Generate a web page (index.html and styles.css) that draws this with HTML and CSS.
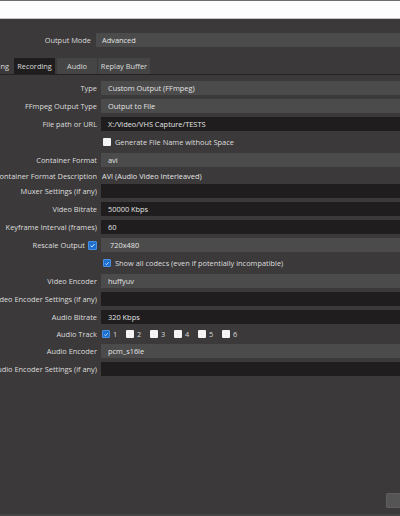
FILE: index.html
```html
<!DOCTYPE html>
<html>
<head>
<meta charset="utf-8">
<link rel="stylesheet" href="styles.css">
</head>
<body>
<div class="page">
  <div class="topbar"></div>
  <div class="mode-row">
    <div class="mode-label"><span>Output Mode</span></div>
    <div class="combo mode-combo">Advanced</div>
  </div>
  <div class="tabs">
    <div class="tab tab-first">Streaming</div>
    <div class="tab tab-active">Recording</div>
    <div class="tab">Audio</div>
    <div class="tab">Replay Buffer</div>
  </div>
  <div class="form">
    <div class="row"><div class="label"><span>Type</span></div><div class="combo">Custom Output (FFmpeg)</div></div>
    <div class="row"><div class="label"><span>FFmpeg Output Type</span></div><div class="combo">Output to File</div></div>
    <div class="row"><div class="label"><span>File path or URL</span></div><div class="field">X:/Video/VHS Capture/TESTS</div></div>
    <div class="row"><div class="label"></div><div class="check-line"><span class="cb"></span><span>Generate File Name without Space</span></div></div>
    <div class="row"><div class="label"><span>Container Format</span></div><div class="combo">avi</div></div>
    <div class="row row-desc"><div class="label"><span>Container Format Description</span></div><div class="plain">AVI (Audio Video Interleaved)</div></div>
    <div class="row"><div class="label"><span>Muxer Settings (if any)</span></div><div class="field"></div></div>
    <div class="row"><div class="label"><span>Video Bitrate</span></div><div class="field">50000 Kbps</div></div>
    <div class="row"><div class="label"><span>Keyframe Interval (frames)</span></div><div class="field">60</div></div>
    <div class="row"><div class="label"><span>Rescale Output</span><span class="cb cb-on cb-label"><svg viewBox="0 0 10 10" width="9" height="9"><path d="M2.2 5.2 L4.2 7.1 L7.9 2.9" fill="none" stroke="#fff" stroke-width="1.2"/></svg></span></div><div class="combo combo-wide">720x480</div></div>
    <div class="row"><div class="label"></div><div class="check-line"><span class="cb cb-on"><svg viewBox="0 0 10 10" width="9" height="9"><path d="M2.2 5.2 L4.2 7.1 L7.9 2.9" fill="none" stroke="#fff" stroke-width="1.2"/></svg></span><span>Show all codecs (even if potentially incompatible)</span></div></div>
    <div class="row"><div class="label"><span>Video Encoder</span></div><div class="combo">huffyuv</div></div>
    <div class="row"><div class="label"><span>Video Encoder Settings (if any)</span></div><div class="field"></div></div>
    <div class="row"><div class="label"><span>Audio Bitrate</span></div><div class="field">320 Kbps</div></div>
    <div class="row row-tracks"><div class="label"><span>Audio Track</span></div>
      <div class="tracks">
        <div class="track"><span class="cb cb-on"><svg viewBox="0 0 10 10" width="9" height="9"><path d="M2.2 5.2 L4.2 7.1 L7.9 2.9" fill="none" stroke="#fff" stroke-width="1.2"/></svg></span><span>1</span></div>
        <div class="track"><span class="cb"></span><span>2</span></div>
        <div class="track"><span class="cb"></span><span>3</span></div>
        <div class="track"><span class="cb"></span><span>4</span></div>
        <div class="track"><span class="cb"></span><span>5</span></div>
        <div class="track"><span class="cb"></span><span>6</span></div>
      </div>
    </div>
    <div class="row"><div class="label"><span>Audio Encoder</span></div><div class="combo">pcm_s16le</div></div>
    <div class="row"><div class="label"><span>Audio Encoder Settings (if any)</span></div><div class="field"></div></div>
  </div>
  <div class="footer">
    <div class="btn"></div>
  </div>
</div>
</body>
</html>
```
FILE: styles.css
```css
html, body {
  margin: 0;
  padding: 0;
}
body {
  background: #3b393a;
  font-family: "Open Sans", "Liberation Sans", sans-serif;
  font-size: 7.4px;
  color: #dedede;
  overflow: hidden;
}
.page {
  width: 400px;
  height: 516px;
  display: flex;
  flex-direction: column;
  overflow: hidden;
}
.topbar {
  height: 17px;
  background: #fdfdfd;
  border-top: 1px solid #6e6e6e;
  border-bottom: 1px solid #c4c4c4;
  flex-shrink: 0;
}
.mode-row {
  display: flex;
  height: 14px;
  margin-top: 14px;
  flex-shrink: 0;
}
.mode-label {
  width: 91px;
  display: flex;
  justify-content: flex-end;
  align-items: center;
  margin-right: 5px;
  flex-shrink: 0;
}
.mode-label span, .label span {
  white-space: nowrap;
  flex-shrink: 0;
}
.combo, .field, .plain {
  flex: 1;
  display: flex;
  align-items: center;
  padding-left: 7px;
  white-space: nowrap;
  color: #e4e4e4;
  min-width: 0;
}
.combo {
  background: #4b4b4b;
}
.mode-combo {
  padding-left: 6px;
}
.field {
  background: #1f1d1e;
}
.plain {
  padding-left: 1px;
}
.tabs {
  display: flex;
  height: 16px;
  margin-top: 11px;
  border-bottom: 1px solid #242223;
  flex-shrink: 0;
  gap: 2px;
}
.tab {
  display: flex;
  align-items: center;
  justify-content: center;
  background: #454545;
  color: #dcdcdc;
  white-space: nowrap;
  padding: 0 5px;
  flex-shrink: 0;
}
.tab-first {
  width: 40px;
  margin-left: -31px;
  justify-content: flex-end;
  padding: 0 3px 0 0;
  background: #3b393a;
}
.tab-active {
  background: #1f1d1e;
  width: 31px;
}
.tab:nth-child(3) {
  width: 30px;
}
.tab:nth-child(4) {
  width: 42px;
  margin-left: -1px;
}
.form {
  display: flex;
  flex-direction: column;
  gap: 4px;
  margin-top: 6px;
  flex-shrink: 0;
}
.row {
  display: flex;
  height: 14px;
}
.row-desc {
  height: 9px;
}
.row-tracks {
  height: 12px;
}
.label {
  width: 97px;
  flex-shrink: 0;
  margin-right: 4px;
  display: flex;
  justify-content: flex-end;
  align-items: center;
}
.check-line {
  display: flex;
  align-items: center;
  padding-left: 2px;
  white-space: nowrap;
}
.cb {
  width: 8px;
  height: 8px;
  background: #f4f4f4;
  border-radius: 1px;
  margin-right: 4px;
  flex-shrink: 0;
  display: flex;
  align-items: center;
  justify-content: center;
}
.cb-on {
  background: #1b6fd1;
  border: 0.5px solid #4b8fe0;
  box-sizing: border-box;
}
.cb-label {
  margin-left: 3px;
  margin-right: 0;
  width: 9px;
  height: 9px;
}
.combo-wide {
  padding-left: 9px;
}
.tracks {
  display: flex;
  align-items: center;
  padding-left: 1px;
}
.track {
  display: flex;
  align-items: center;
  width: 24px;
  color: #d8d8d8;
}
.track .cb {
  margin-right: 3px;
}
.footer {
  margin-top: auto;
  display: flex;
  justify-content: flex-end;
  padding-bottom: 6px;
  border-bottom: 2px solid #454545;
}
.btn {
  width: 14px;
  height: 15px;
  background: #555555;
  border: 1px solid #5e5e5e;
  border-right: none;
  border-radius: 2px 0 0 2px;
  box-sizing: border-box;
}
```
